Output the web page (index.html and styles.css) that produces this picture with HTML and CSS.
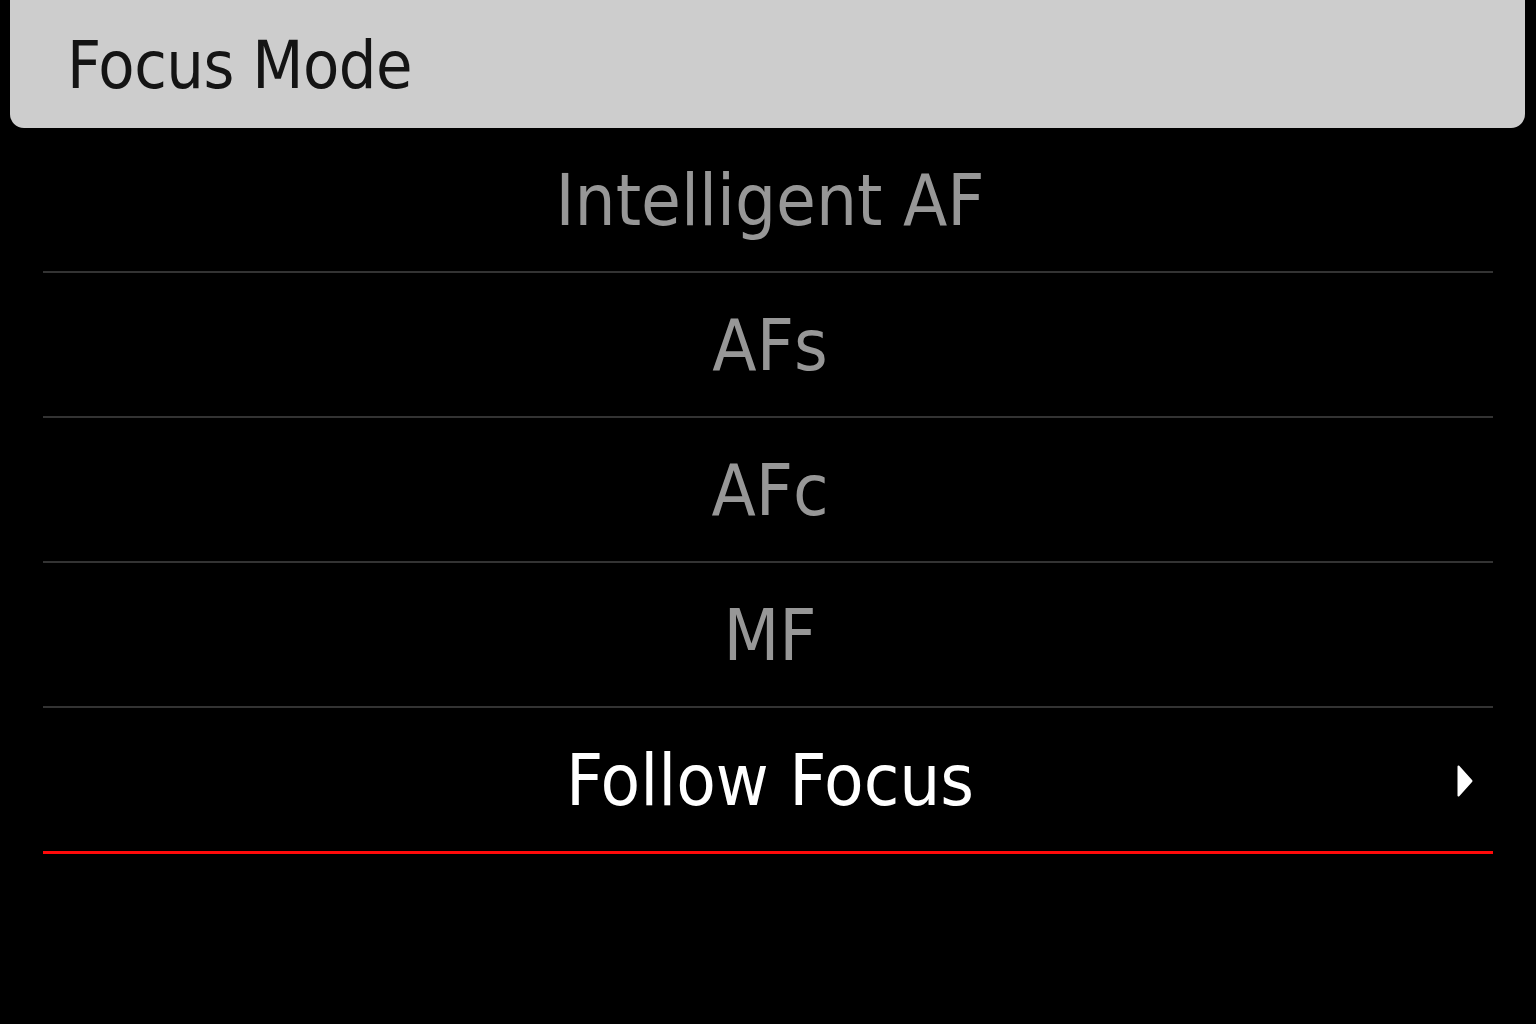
FILE: index.html
```html
<!DOCTYPE html>
<html lang="en">
<head>
    <meta charset="UTF-8">
    <title>Focus Mode</title>
    <link rel="stylesheet" href="styles.css">
</head>
<body>
    <div class="screen">
        <div class="header">
            <h1>Focus Mode</h1>
        </div>

        <ul class="menu">
            <li class="item">Intelligent AF</li>
            <li class="item">AFs</li>
            <li class="item">AFc</li>
            <li class="item">MF</li>
            <li class="item active">
                Follow Focus
                <svg class="arrow" width="16" height="32" viewBox="0 0 16 32">
                    <polygon points="1.5,1.5 14.5,16 1.5,30.5" fill="#fff" stroke="#fff" stroke-width="2" stroke-linejoin="round"/>
                </svg>
            </li>
        </ul>
    </div>
</body>
</html>
```

FILE: styles.css
```css
body {
    margin: 0;
    background: #000;
    font-family: 'DejaVu Sans Condensed', 'DejaVu Sans', sans-serif;
}
.screen {
    width: 1536px;
    height: 1024px;
    background: #000;
    overflow: hidden;
}
.header {
    margin: 0 11px 0 10px;
    height: 128px;
    background: #cdcdcd;
    border-radius: 0 0 14px 14px;
    display: flex;
    align-items: center;
    padding-left: 57px;
}
.header h1 {
    margin: 0;
    font-size: 66px;
    font-weight: normal;
    color: #141414;
    letter-spacing: -0.5px;
    position: relative;
    top: 1px;
}
.menu {
    list-style: none;
    margin: 0 43px;
    padding: 0;
}
.item {
    position: relative;
    height: 143px;
    border-bottom: 2px solid #333;
    display: flex;
    align-items: center;
    justify-content: center;
    font-size: 72px;
    color: #979797;
    padding-left: 4px;
}
.item.active {
    color: #fff;
    border-bottom: 3px solid #ff0a0a;
}
.arrow {
    position: absolute;
    right: 20px;
    top: 50%;
    margin-top: -15px;
}
```
